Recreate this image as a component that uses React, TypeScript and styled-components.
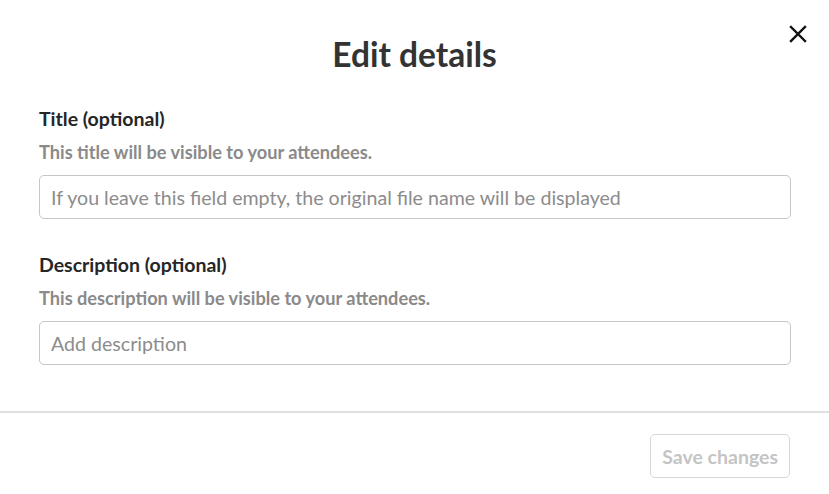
import React from "react";
import styled, { createGlobalStyle } from "styled-components";

const GlobalStyle = createGlobalStyle`
  html, body {
    margin: 0;
    padding: 0;
    background: #fff;
    font-family: Lato, "Noto Sans", sans-serif;
  }
`;

export default function App() {
  return (
    <>
      <GlobalStyle />
      <Modal>
        <Header>
          <Heading>Edit details</Heading>
          <CloseButton aria-label="Close">
            <svg width="18" height="18" viewBox="0 0 18 18">
              <path d="M2 2 L16 16 M16 2 L2 16" stroke="#111" strokeWidth="2.4" strokeLinecap="square" />
            </svg>
          </CloseButton>
        </Header>
        <Body>
          <Field>
            <Label>Title (optional)</Label>
            <Hint>This title will be visible to your attendees.</Hint>
            <Input placeholder="If you leave this field empty, the original file name will be displayed" />
          </Field>
          <Field>
            <Label>Description (optional)</Label>
            <Hint>This description will be visible to your attendees.</Hint>
            <Input placeholder="Add description" />
          </Field>
        </Body>
        <Footer>
          <SaveButton disabled>Save changes</SaveButton>
        </Footer>
      </Modal>
    </>
  );
}

const Modal = styled.div`
  width: 829px;
  height: 494px;
  display: flex;
  flex-direction: column;
  background: #fff;
`;

const Header = styled.div`
  position: relative;
  display: flex;
  justify-content: center;
  padding-top: 34px;
`;

const Heading = styled.h1`
  margin: 0;
  font-size: 33.5px;
  line-height: 40px;
  font-weight: 700;
  color: #333;
`;

const CloseButton = styled.button`
  position: absolute;
  top: 25px;
  right: 22px;
  border: none;
  background: none;
  padding: 0;
  width: 18px;
  height: 18px;
  cursor: pointer;
  display: flex;
`;

const Body = styled.div`
  padding: 33px 38px 0 39px;
  display: flex;
  flex-direction: column;
  gap: 34px;
`;

const Field = styled.div`
  display: flex;
  flex-direction: column;
`;

const Label = styled.div`
  font-size: 19.5px;
  line-height: 24px;
  font-weight: 700;
  color: #262626;
`;

const Hint = styled.div`
  margin-top: 10px;
  font-size: 18.2px;
  line-height: 22px;
  font-weight: 700;
  color: #8a8a8a;
`;

const Input = styled.input`
  margin-top: 12px;
  box-sizing: border-box;
  height: 44px;
  width: 100%;
  border: 1px solid #c6c6c6;
  border-radius: 5px;
  padding: 0 11px;
  font-family: Lato, "Noto Sans", sans-serif;
  font-size: 19.6px;
  color: #333;
  outline: none;
  &::placeholder {
    color: #8c8c8c;
  }
`;

const Footer = styled.div`
  margin-top: 46px;
  border-top: 2px solid #e0e0e0;
  padding: 21px 39px 0 0;
  display: flex;
  justify-content: flex-end;
`;

const SaveButton = styled.button`
  box-sizing: border-box;
  height: 44px;
  padding: 0 11px;
  border: 1px solid #d6d6d6;
  border-radius: 5px;
  background: #fff;
  font-family: Lato, "Noto Sans", sans-serif;
  font-size: 19.5px;
  font-weight: 700;
  color: #c4c4c4;
`;
